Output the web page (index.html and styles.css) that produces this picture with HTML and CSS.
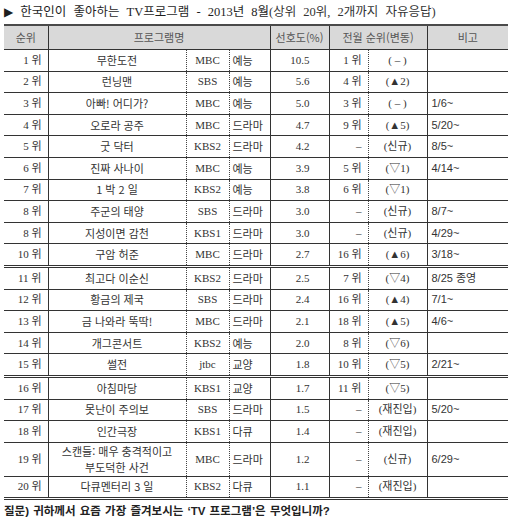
FILE: index.html
```html
<!DOCTYPE html>
<html lang="ko">
<head>
<meta charset="utf-8">
<title>한국인이 좋아하는 TV프로그램</title>
<link rel="stylesheet" href="styles.css">
</head>
<body>
<div class="page">
  <div class="title"><span class="tri">▶</span> 한국인이 좋아하는 TV프로그램 - 2013년 8월<span class="sub">(상위 20위, 2개까지 자유응답)</span></div>
  <table class="rank">
    <colgroup>
      <col class="w-rank"><col class="w-name"><col class="w-ch"><col class="w-genre"><col class="w-pref"><col class="w-prev"><col class="w-chg"><col class="w-note">
    </colgroup>
    <thead>
      <tr><th class="sr">순위</th><th colspan="3" class="sr">프로그램명</th><th class="sr">선호도(%)</th><th colspan="2" class="sr">전월 순위(변동)</th><th>비고</th></tr>
    </thead>
    <tbody>
      <tr><td class="rk">1 위</td><td class="nm">무한도전</td><td class="ch">MBC</td><td class="gn">예능</td><td class="pf">10.5</td><td class="pv">1 위</td><td class="cg">( – )</td><td class="nt"></td></tr>
      <tr><td class="rk">2 위</td><td class="nm">런닝맨</td><td class="ch">SBS</td><td class="gn">예능</td><td class="pf">5.6</td><td class="pv">4 위</td><td class="cg">(▲2)</td><td class="nt"></td></tr>
      <tr><td class="rk">3 위</td><td class="nm">아빠! 어디가?</td><td class="ch">MBC</td><td class="gn">예능</td><td class="pf">5.0</td><td class="pv">3 위</td><td class="cg">( – )</td><td class="nt">1/6~</td></tr>
      <tr><td class="rk">4 위</td><td class="nm">오로라 공주</td><td class="ch">MBC</td><td class="gn">드라마</td><td class="pf">4.7</td><td class="pv">9 위</td><td class="cg">(▲5)</td><td class="nt">5/20~</td></tr>
      <tr><td class="rk">5 위</td><td class="nm">굿 닥터</td><td class="ch">KBS2</td><td class="gn">드라마</td><td class="pf">4.2</td><td class="pv">–</td><td class="cg">(신규)</td><td class="nt">8/5~</td></tr>
      <tr><td class="rk">6 위</td><td class="nm">진짜 사나이</td><td class="ch">MBC</td><td class="gn">예능</td><td class="pf">3.9</td><td class="pv">5 위</td><td class="cg">(▽1)</td><td class="nt">4/14~</td></tr>
      <tr><td class="rk">7 위</td><td class="nm">1 박 2 일</td><td class="ch">KBS2</td><td class="gn">예능</td><td class="pf">3.8</td><td class="pv">6 위</td><td class="cg">(▽1)</td><td class="nt"></td></tr>
      <tr><td class="rk">8 위</td><td class="nm">주군의 태양</td><td class="ch">SBS</td><td class="gn">드라마</td><td class="pf">3.0</td><td class="pv">–</td><td class="cg">(신규)</td><td class="nt">8/7~</td></tr>
      <tr><td class="rk">8 위</td><td class="nm">지성이면 감천</td><td class="ch">KBS1</td><td class="gn">드라마</td><td class="pf">3.0</td><td class="pv">–</td><td class="cg">(신규)</td><td class="nt">4/29~</td></tr>
      <tr class="dbl"><td class="rk">10 위</td><td class="nm">구암 허준</td><td class="ch">MBC</td><td class="gn">드라마</td><td class="pf">2.7</td><td class="pv">16 위</td><td class="cg">(▲6)</td><td class="nt">3/18~</td></tr>
      <tr><td class="rk">11 위</td><td class="nm">최고다 이순신</td><td class="ch">KBS2</td><td class="gn">드라마</td><td class="pf">2.5</td><td class="pv">7 위</td><td class="cg">(▽4)</td><td class="nt">8/25 종영</td></tr>
      <tr><td class="rk">12 위</td><td class="nm">황금의 제국</td><td class="ch">SBS</td><td class="gn">드라마</td><td class="pf">2.4</td><td class="pv">16 위</td><td class="cg">(▲4)</td><td class="nt">7/1~</td></tr>
      <tr><td class="rk">13 위</td><td class="nm">금 나와라 뚝딱!</td><td class="ch">MBC</td><td class="gn">드라마</td><td class="pf">2.1</td><td class="pv">18 위</td><td class="cg">(▲5)</td><td class="nt">4/6~</td></tr>
      <tr><td class="rk">14 위</td><td class="nm">개그콘서트</td><td class="ch">KBS2</td><td class="gn">예능</td><td class="pf">2.0</td><td class="pv">8 위</td><td class="cg">(▽6)</td><td class="nt"></td></tr>
      <tr class="dbl"><td class="rk">15 위</td><td class="nm">썰전</td><td class="ch">jtbc</td><td class="gn">교양</td><td class="pf">1.8</td><td class="pv">10 위</td><td class="cg">(▽5)</td><td class="nt">2/21~</td></tr>
      <tr><td class="rk">16 위</td><td class="nm">아침마당</td><td class="ch">KBS1</td><td class="gn">교양</td><td class="pf">1.7</td><td class="pv">11 위</td><td class="cg">(▽5)</td><td class="nt"></td></tr>
      <tr><td class="rk">17 위</td><td class="nm">못난이 주의보</td><td class="ch">SBS</td><td class="gn">드라마</td><td class="pf">1.5</td><td class="pv">–</td><td class="cg">(재진입)</td><td class="nt">5/20~</td></tr>
      <tr><td class="rk">18 위</td><td class="nm">인간극장</td><td class="ch">KBS1</td><td class="gn">다큐</td><td class="pf">1.4</td><td class="pv">–</td><td class="cg">(재진입)</td><td class="nt"></td></tr>
      <tr class="tall"><td class="rk">19 위</td><td class="nm"><span class="ln">스캔들: 매우 충격적이고</span><span class="ln">부도덕한 사건</span></td><td class="ch">MBC</td><td class="gn">드라마</td><td class="pf">1.2</td><td class="pv">–</td><td class="cg">(신규)</td><td class="nt">6/29~</td></tr>
      <tr class="dbl"><td class="rk">20 위</td><td class="nm">다큐멘터리 3 일</td><td class="ch">KBS2</td><td class="gn">다큐</td><td class="pf">1.1</td><td class="pv">–</td><td class="cg">(재진입)</td><td class="nt"></td></tr>
    </tbody>
  </table>
  <div class="question">질문) 귀하께서 요즘 가장 즐겨보시는 ‘TV 프로그램’은 무엇입니까?</div>
</div>
</body>
</html>
```

FILE: styles.css
```css
html, body {
  margin: 0;
  padding: 0;
  background: #ffffff;
}

.page {
  width: 520px;
  padding: 4px 0 0 4px;
  box-sizing: border-box;
  font-family: "Liberation Serif", "Noto Sans CJK KR", serif;
  color: #333333;
}

.title {
  height: 20px;
  font-size: 12.5px;
  line-height: 16px;
  word-spacing: 4px;
  color: #1e1e1e;
  white-space: nowrap;
}

.title .tri {
  font-family: "DejaVu Sans", sans-serif;
  font-size: 12px;
}

.title .sub {
  color: #333333;
}

.rank {
  width: 504px;
  border-collapse: collapse;
  table-layout: fixed;
  font-size: 11px;
  line-height: 13px;
}

.w-rank { width: 44px; }
.w-name { width: 138px; }
.w-ch { width: 43px; }
.w-genre { width: 41px; }
.w-pref { width: 59px; }
.w-prev { width: 39px; }
.w-chg { width: 59px; }
.w-note { width: 81px; }

.rank th {
  height: 23px;
  padding: 0;
  background: #d9d9d9;
  border-top: 2px solid #4a4a4a;
  border-bottom: 1px solid #333333;
  font-family: "Noto Sans CJK KR", sans-serif;
  font-weight: normal;
  color: #555555;
  text-align: center;
  white-space: nowrap;
}

.rank th.sr {
  border-right: 1px solid #333333;
}

.rank td {
  height: 20.6px;
  padding: 0;
  border-bottom: 1px solid #333333;
  white-space: nowrap;
  overflow: hidden;
  color: #333333;
}

.rank tr.dbl td {
  border-bottom: 3px double #333333;
}

.rank tr.tall td {
  height: 33px;
}

.rk {
  text-align: right;
  padding-right: 6px !important;
  border-right: 1px solid #333333;
}

.nm {
  text-align: center;
  font-family: "Noto Sans CJK KR", sans-serif;
  border-right: 1px dotted #444444;
}

.nm .ln {
  display: block;
  line-height: 16px;
}

.ch {
  text-align: center;
  border-right: 1px dotted #444444;
  color: #444444;
}

.gn {
  text-align: left;
  padding-left: 3px !important;
  font-family: "Noto Sans CJK KR", sans-serif;
  border-right: 1px solid #333333;
}

.pf {
  text-align: right;
  padding-right: 19px !important;
  border-right: 1px solid #333333;
}

.pv {
  text-align: right;
  padding-right: 6px !important;
  border-right: 1px dotted #444444;
}

.cg {
  text-align: center;
  border-right: 1px solid #333333;
}

.nt {
  text-align: left;
  padding-left: 4px !important;
  font-family: "Liberation Sans", "Noto Sans CJK KR", sans-serif;
}

.question {
  margin-top: 4px;
  font-family: "Liberation Sans", "Noto Sans CJK KR", sans-serif;
  font-size: 11.5px;
  line-height: 14px;
  word-spacing: 1px;
  font-weight: bold;
  color: #222222;
  white-space: nowrap;
}
```
